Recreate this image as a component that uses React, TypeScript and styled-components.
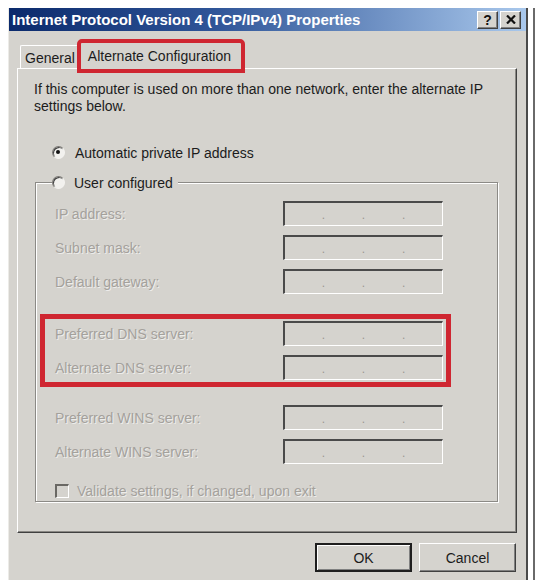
import React from "react";
import styled, { createGlobalStyle } from "styled-components";

const face = "#d5d3ce";
const red = "#cf2631";
const greyText = "#a4a19c";

const GlobalStyle = createGlobalStyle`
  body {
    margin: 0;
    background: #ffffff;
    font-family: "Liberation Sans", Arial, sans-serif;
    font-size: 14px;
    color: #1c1c1c;
  }
`;

type RowInfo = { label: string };

const ipRows: RowInfo[] = [
  { label: "IP address:" },
  { label: "Subnet mask:" },
  { label: "Default gateway:" },
];
const dnsRows: RowInfo[] = [
  { label: "Preferred DNS server:" },
  { label: "Alternate DNS server:" },
];
const winsRows: RowInfo[] = [
  { label: "Preferred WINS server:" },
  { label: "Alternate WINS server:" },
];

const IpField: React.FC<RowInfo> = ({ label }) => (
  <Row>
    <FieldLabel $width={228}>{label}</FieldLabel>
    <AddressBox>
      <Dot>.</Dot>
      <Dot>.</Dot>
      <Dot>.</Dot>
    </AddressBox>
  </Row>
);

const App: React.FC = () => {
  return (
    <Page>
      <GlobalStyle />
      <Window>
        <TitleBar>
          <Title>Internet Protocol Version 4 (TCP/IPv4) Properties</Title>
          <CaptionButton>?</CaptionButton>
          <CaptionButton aria-label="Close">
            <svg width="10" height="9" viewBox="0 0 10 9">
              <path d="M1 0.5 L9 8.5 M9 0.5 L1 8.5" stroke="#111" strokeWidth="2.2" />
            </svg>
          </CaptionButton>
        </TitleBar>

        <Body>
          <TabRow>
            <Tab>General</Tab>
            <Tab $active>Alternate Configuration</Tab>
          </TabRow>

          <Panel>
            <Intro>
              If this computer is used on more than one network, enter the alternate IP
              settings below.
            </Intro>

            <Option>
              <Radio $checked />
              <span>Automatic private IP address</span>
            </Option>

            <Group>
              <Legend>
                <Radio />
                <span>User configured</span>
              </Legend>

              <Rows>
                <Stack>
                  {ipRows.map((r) => (
                    <IpField key={r.label} {...r} />
                  ))}
                </Stack>

                <Highlight>
                  {dnsRows.map((r) => (
                    <IpField key={r.label} {...r} />
                  ))}
                </Highlight>

                <Stack $top={23}>
                  {winsRows.map((r) => (
                    <IpField key={r.label} {...r} />
                  ))}
                </Stack>

                <CheckRow>
                  <CheckBox />
                  <FieldLabel>Validate settings, if changed, upon exit</FieldLabel>
                </CheckRow>
              </Rows>
            </Group>
          </Panel>

          <ButtonRow>
            <PushButton $default>OK</PushButton>
            <PushButton>Cancel</PushButton>
          </ButtonRow>
        </Body>
      </Window>
    </Page>
  );
};

const Page = styled.div`
  padding: 8px 0 0 8px;
`;

const Window = styled.div`
  width: 520px;
  height: 572px;
  box-sizing: border-box;
  display: flex;
  flex-direction: column;
  background: ${face};
  border-left: 1px solid #ecebe7;
  border-right: 2px solid #4a4a4a;
  box-shadow: 5px 0 0 #ffffff, 7px 0 0 #6a6a6a;
`;

const TitleBar = styled.div`
  height: 23px;
  display: flex;
  align-items: center;
  gap: 2px;
  padding: 0 5px 0 3px;
  background: linear-gradient(90deg, #0b2a6c 0%, #2f5598 40%, #a9c8ec 100%);
`;

const Title = styled.span`
  flex: 1;
  color: #ffffff;
  font-weight: bold;
  font-size: 15px;
  white-space: nowrap;
`;

const CaptionButton = styled.button`
  width: 21px;
  height: 18px;
  padding: 0;
  display: flex;
  align-items: center;
  justify-content: center;
  background: ${face};
  border: 1px solid;
  border-color: #ffffff #404040 #404040 #ffffff;
  box-shadow: inset -1px -1px 0 #808080;
  font: bold 14px "Liberation Sans", Arial, sans-serif;
  color: #111111;
`;

const Body = styled.div`
  flex: 1;
  display: flex;
  flex-direction: column;
  padding: 11px 9px 0 8px;
`;

const TabRow = styled.div`
  height: 26px;
  display: flex;
  align-items: flex-end;
  padding-left: 3px;
  position: relative;
  z-index: 1;
`;

const Tab = styled.div<{ $active?: boolean }>`
  box-sizing: border-box;
  height: ${(p) => (p.$active ? "28px" : "23px")};
  margin-bottom: ${(p) => (p.$active ? "-2px" : "0")};
  margin-left: ${(p) => (p.$active ? "2px" : "0")};
  padding: ${(p) => (p.$active ? "5px 10px 0 7px" : "4px 2px 0 4px")};
  background: ${face};
  border-top: 1px solid #ffffff;
  border-left: 1px solid #ffffff;
  border-right: 1px solid #6e6c68;
  border-top-left-radius: 2px;
  border-top-right-radius: 2px;
  outline: ${(p) => (p.$active ? `4px solid ${red}` : "none")};
  outline-offset: -1px;
  white-space: nowrap;
`;

const Panel = styled.div`
  box-sizing: border-box;
  height: 465px;
  padding: 12px 16px 0 16px;
  background: ${face};
  border-top: 1px solid #ffffff;
  border-left: 1px solid #ffffff;
  border-right: 1px solid #404040;
  border-bottom: 1px solid #404040;
  box-shadow: inset -1px -1px 0 #8a8884;
`;

const Intro = styled.p`
  margin: 0;
  width: 470px;
  line-height: 17px;
`;

const Option = styled.div`
  margin-top: 29px;
  padding-left: 18px;
  height: 17px;
  display: flex;
  align-items: center;
  gap: 10px;
`;

const Radio = styled.span<{ $checked?: boolean }>`
  position: relative;
  flex: none;
  width: 13px;
  height: 13px;
  box-sizing: border-box;
  border-radius: 50%;
  border: 1px solid;
  border-color: #7a7874 #f4f3f0 #f4f3f0 #7a7874;
  background: #f2f1ee;
  box-shadow: inset 1px 1px 0 #404040;

  &::after {
    content: "";
    display: ${(p) => (p.$checked ? "block" : "none")};
    position: absolute;
    left: 3px;
    top: 3px;
    width: 4px;
    height: 4px;
    border-radius: 50%;
    background: #111111;
  }
`;

const Group = styled.fieldset`
  margin: 13px 0 0 1px;
  padding: 0;
  width: 463px;
  box-sizing: border-box;
  border: 1px solid #8c8a86;
  box-shadow: inset 1px 1px 0 #ffffff, 1px 1px 0 #ffffff;
`;

const Legend = styled.legend`
  margin-left: 16px;
  padding: 0 5px 0 0;
  height: 17px;
  display: flex;
  align-items: center;
  gap: 9px;
  background: ${face};
`;

const Rows = styled.div`
  display: flex;
  flex-direction: column;
  padding: 10px 51px 3px 9px;
`;

const Stack = styled.div<{ $top?: number }>`
  display: flex;
  flex-direction: column;
  gap: 9px;
  margin-top: ${(p) => p.$top ?? 0}px;
`;

const Highlight = styled.div`
  display: flex;
  flex-direction: column;
  gap: 9px;
  margin-top: 25px;
  padding: 2px 0;
  outline: 5px solid ${red};
`;

const Row = styled.div`
  height: 25px;
  display: flex;
  align-items: center;
  padding-left: 10px;
`;

const FieldLabel = styled.span<{ $width?: number }>`
  width: ${(p) => (p.$width ? `${p.$width}px` : "auto")};
  color: ${greyText};
  text-shadow: 1px 1px 0 rgba(255, 255, 255, 0.6);
  white-space: nowrap;
`;

const AddressBox = styled.div`
  width: 160px;
  height: 25px;
  box-sizing: border-box;
  display: flex;
  justify-content: space-evenly;
  align-items: center;
  border-top: 2px solid #4a4a4a;
  border-left: 2px solid #4a4a4a;
  border-right: 1px solid #ffffff;
  border-bottom: 1px solid #ffffff;
  background: ${face};
`;

const Dot = styled.span`
  color: #9a9792;
  font-size: 12px;
  line-height: 12px;
  padding-top: 2px;
`;

const CheckRow = styled.div`
  margin-top: 20px;
  height: 14px;
  display: flex;
  align-items: center;
  gap: 8px;
  padding-left: 10px;
`;

const CheckBox = styled.span`
  flex: none;
  width: 14px;
  height: 14px;
  box-sizing: border-box;
  border-top: 2px solid #6a6864;
  border-left: 2px solid #6a6864;
  border-right: 1px solid #ffffff;
  border-bottom: 1px solid #ffffff;
  background: ${face};
`;

const ButtonRow = styled.div`
  margin-top: 10px;
  display: flex;
  justify-content: flex-end;
  gap: 7px;
  padding-right: 1px;
`;

const PushButton = styled.button<{ $default?: boolean }>`
  width: 97px;
  height: 29px;
  padding: 0;
  background: ${face};
  font: 14px "Liberation Sans", Arial, sans-serif;
  color: #1c1c1c;
  border: ${(p) => (p.$default ? "2px solid #1e1e1e" : "1px solid")};
  border-color: ${(p) =>
    p.$default ? "#1e1e1e" : "#ffffff #404040 #404040 #ffffff"};
  box-shadow: ${(p) =>
    p.$default
      ? "inset 1px 1px 0 #ffffff, inset -1px -1px 0 #808080"
      : "inset -1px -1px 0 #808080"};
`;

export default App;
